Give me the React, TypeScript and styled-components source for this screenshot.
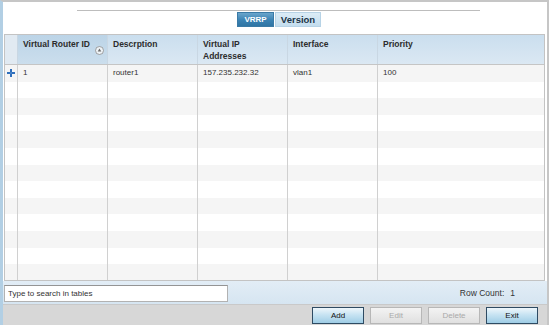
import React from "react";
import styled, { createGlobalStyle } from "styled-components";

const GlobalStyle = createGlobalStyle`
	body {
		margin: 0;
		font-family: "Liberation Sans", Arial, sans-serif;
		background: #ffffff;
	}
`;

const COLUMNS = "12px 90px 90px 90px 90px 1fr";

const columns = [
	{ key: "id", label: "Virtual Router ID", sorted: true },
	{ key: "desc", label: "Descrption" },
	{ key: "vip", label: <>Virtual IP<br />Addresses</> },
	{ key: "iface", label: "Interface" },
	{ key: "prio", label: "Priority" },
];

const data = [
	{ id: "1", desc: "router1", vip: "157.235.232.32", iface: "vlan1", prio: "100" },
];

const ROW_TOTAL = 13;

/* exported component */
const App = () => {
	const rows = Array.from({ length: ROW_TOTAL }, (_, i) => data[i] || null);
	return (
		<>
			<GlobalStyle />
			<Frame>
				<TopArea>
					<Rule />
					<TabRow>
						<Tab $active>VRRP</Tab>
						<Tab>Version</Tab>
					</TabRow>
				</TopArea>

				<Table>
					<HeaderRow>
						<HeaderCell $expander />
						{columns.map((c) => (
							<HeaderCell key={c.key} $sorted={c.sorted}>
								{c.label}
								{c.sorted && <SortIcon />}
							</HeaderCell>
						))}
					</HeaderRow>
					{rows.map((r, i) => (
						<BodyRow key={i} $alt={i % 2 === 0}>
							<ExpanderCell>{r && <PlusIcon />}</ExpanderCell>
							<Cell>{r?.id}</Cell>
							<Cell>{r?.desc}</Cell>
							<Cell>{r?.vip}</Cell>
							<Cell>{r?.iface}</Cell>
							<Cell>{r?.prio}</Cell>
						</BodyRow>
					))}
				</Table>

				<SearchBar>
					<SearchInput placeholder="Type to search in tables" />
					<RowCount>
						Row Count:<span>{data.length}</span>
					</RowCount>
				</SearchBar>

				<ButtonBar>
					<Button $primary>Add</Button>
					<Button disabled>Edit</Button>
					<Button disabled>Delete</Button>
					<Button $primary>Exit</Button>
				</ButtonBar>
			</Frame>
		</>
	);
};

const PlusIcon = () => (
	<svg width="8" height="8" viewBox="0 0 8 8">
		<path d="M3 0h2v3h3v2H5v3H3V5H0V3h3z" fill="#2f6fbc" />
		<path d="M3.5 3.5h1v1h-1z" fill="#8fb9e8" />
	</svg>
);

const SortIcon = () => (
	<SortWrap>
		<svg width="9" height="9" viewBox="0 0 9 9">
			<circle cx="4.5" cy="4.5" r="4" fill="#eef3f7" stroke="#8c8c8c" strokeWidth="0.8" />
			<path d="M4.5 2.6L6.3 5.4H2.7z" fill="#6c6c6c" />
		</svg>
	</SortWrap>
);

export default App;

// Styled Components
const Frame = styled.div`
	box-sizing: border-box;
	width: 549px;
	height: 325px;
	display: flex;
	flex-direction: column;
	border-top: 2px solid #c6c6c6;
	border-right: 2px solid #c6c6c6;
	border-left: 3px solid #b2cfe4;
	background: #ffffff;
	overflow: hidden;
`;

const TopArea = styled.div`
	height: 32px;
	padding-top: 8px;
	box-sizing: border-box;
	flex-shrink: 0;
`;

const Rule = styled.div`
	margin-left: 74px;
	width: 403px;
	height: 1px;
	background: #bdbdbd;
`;

const TabRow = styled.div`
	display: flex;
	margin-top: 1px;
	padding-left: 234px;
`;

const Tab = styled.div<{ $active?: boolean }>`
	height: 15px;
	box-sizing: border-box;
	padding: 0 6px;
	display: flex;
	align-items: center;
	font-weight: bold;
	font-size: ${(p) => (p.$active ? "8px" : "9.5px")};
	color: ${(p) => (p.$active ? "#ffffff" : "#1c3446")};
	background: ${(p) =>
		p.$active
			? "linear-gradient(#6aa5cc, #3a82b3 55%, #2f75a4)"
			: "linear-gradient(#dcecf6, #c3ddee)"};
	border: 1px solid ${(p) => (p.$active ? "#3a7aa6" : "#b7d3e6")};
	width: ${(p) => (p.$active ? "37px" : "46px")};
	justify-content: center;
	margin-right: 1px;
`;

const Table = styled.div`
	margin-left: 1px;
	width: 541px;
	height: 247px;
	box-sizing: border-box;
	border: 1px solid #c3c3c3;
	display: flex;
	flex-direction: column;
	overflow: hidden;
	flex-shrink: 0;
`;

const HeaderRow = styled.div`
	display: grid;
	grid-template-columns: ${COLUMNS};
	height: 30px;
	flex-shrink: 0;
	border-bottom: 1px solid #c5c5c5;
	box-sizing: border-box;
`;

const HeaderCell = styled.div<{ $sorted?: boolean; $expander?: boolean }>`
	position: relative;
	box-sizing: border-box;
	padding: 3px 5px 0;
	font-size: 8.5px;
	line-height: 12px;
	font-weight: bold;
	color: #2c2c2c;
	border-left: ${(p) => (p.$expander ? "none" : "1px solid #c9d7e3")};
	background: ${(p) =>
		p.$expander
			? "#e1eaf2"
			: p.$sorted
			? "linear-gradient(#bcd4e7, #cbdeed)"
			: "linear-gradient(#cadeee, #dbe8f3)"};
`;

const SortWrap = styled.span`
	position: absolute;
	right: 3px;
	top: 11px;
	line-height: 0;
`;

const BodyRow = styled.div<{ $alt?: boolean }>`
	display: grid;
	grid-template-columns: ${COLUMNS};
	height: 16.6px;
	flex-shrink: 0;
	background: ${(p) => (p.$alt ? "#f5f5f5" : "#ffffff")};
`;

const ExpanderCell = styled.div`
	display: flex;
	align-items: center;
	justify-content: center;
`;

const Cell = styled.div`
	box-sizing: border-box;
	padding-left: 5px;
	border-left: 1px solid #d0d0d0;
	font-size: 8px;
	line-height: 16.6px;
	color: #333333;
	white-space: nowrap;
`;

const SearchBar = styled.div`
	height: 23px;
	box-sizing: border-box;
	flex-shrink: 0;
	display: flex;
	align-items: flex-start;
	padding: 4px 0 0 1px;
	background: linear-gradient(#e2edf6, #d6e5f1);
`;

const SearchInput = styled.input`
	width: 224px;
	height: 17px;
	box-sizing: border-box;
	border: 1px solid #b2b2b2;
	border-top-color: #949494;
	padding: 0 3px;
	font-family: "Liberation Sans", Arial, sans-serif;
	font-size: 8px;
	outline: none;
	&::placeholder {
		color: #333333;
	}
`;

const RowCount = styled.div`
	margin-left: auto;
	padding-right: 32px;
	font-size: 8.5px;
	line-height: 17px;
	color: #333333;
	span {
		margin-left: 6px;
	}
`;

const ButtonBar = styled.div`
	height: 21px;
	box-sizing: border-box;
	flex-shrink: 0;
	display: flex;
	align-items: center;
	justify-content: flex-end;
	gap: 6px;
	padding-right: 9px;
	background: #d7d7d7;
	border-top: 1px solid #c9c9c9;
`;

const Button = styled.button<{ $primary?: boolean }>`
	width: 52px;
	height: 17px;
	box-sizing: border-box;
	padding: 0;
	font-family: "Liberation Sans", Arial, sans-serif;
	font-size: 8px;
	color: ${(p) => (p.$primary ? "#111111" : "#a9a9a9")};
	border: 1px solid ${(p) => (p.$primary ? "#2e4b63" : "#b7b7b7")};
	background: ${(p) =>
		p.$primary
			? "linear-gradient(#eef6fb, #c7e3f2 45%, #9fcde6)"
			: "linear-gradient(#f3f3f3, #e0e0e0)"};
`;
